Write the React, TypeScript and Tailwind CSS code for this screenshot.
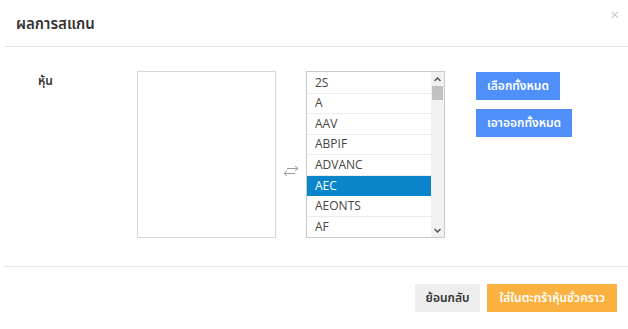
import React from "react";

const items = ["2S", "A", "AAV", "ABPIF", "ADVANC", "AEC", "AEONTS", "AF"];

export default function App() {
  return (
    <div
      className="w-[628px] h-[329px] bg-white overflow-hidden relative"
      style={{ fontFamily: '"Open Sans", "Noto Sans", "Noto Sans Thai", "Noto Sans CJK SC", sans-serif' }}
    >
      {/* header */}
      <div className="ml-[4px] h-[47px] border-b border-[#e5e5e5] flex items-center pl-[12px] relative">
        <span className="text-[15px] font-semibold text-[#333] leading-none">ผลการสแกน</span>
        <span className="absolute right-[9px] top-[7px] text-[#c8c8c8] text-[15px] leading-none">×</span>
      </div>

      {/* body */}
      <div className="ml-[4px] h-[220px] border-b border-[#e5e5e5] flex pt-[24px]">
        <div className="w-[133px] pl-[34px] pt-[1px] text-[12px] font-semibold text-[#333]">หุ้น</div>
        <div className="w-[139px] h-[167px] border border-[#d6d6d6]" />
        <div className="w-[30px] flex items-center justify-center pt-[4px]">
          <svg width="18" height="14" viewBox="0 0 18 14" fill="none" stroke="#9a9a9a" strokeWidth="1">
            <path d="M5 4.5 H16 M13 2 L16 4.5 L13 7" />
            <path d="M13 9.5 H2 M5 7 L2 9.5 L5 12" />
          </svg>
        </div>
        <div className="w-[139px] h-[167px] border border-[#c9c9c9] flex">
          <div className="flex-1 flex flex-col pt-[1px]">
            {items.map((it, i) => (
              <div
                key={it}
                className={
                  "h-[20.6px] flex items-center pl-[8px] text-[12px] " +
                  (it === "AEC"
                    ? "bg-[#0a85c9] text-white"
                    : "text-[#444] " + (i < items.length - 1 ? "border-b border-[#ececec]" : ""))
                }
              >
                {it}
              </div>
            ))}
          </div>
          <div className="w-[13px] bg-[#f1f1f1] flex flex-col items-center">
            <div className="h-[14px] flex items-center justify-center">
              <svg width="7" height="5" viewBox="0 0 7 5"><path d="M0.5 4 L3.5 1 L6.5 4" stroke="#555" strokeWidth="1.5" fill="none" /></svg>
            </div>
            <div className="w-[11px] h-[14px] bg-[#c1c1c1]" />
            <div className="flex-1" />
            <div className="h-[14px] flex items-center justify-center">
              <svg width="7" height="5" viewBox="0 0 7 5"><path d="M0.5 1 L3.5 4 L6.5 1" stroke="#555" strokeWidth="1.5" fill="none" /></svg>
            </div>
          </div>
        </div>
        <div className="ml-[31px] flex flex-col items-start gap-[9px] pt-[1px]">
          <button className="h-[28px] px-[11px] bg-[#4f8ffa] text-white text-[12px] font-semibold">เลือกทั้งหมด</button>
          <button className="h-[28px] px-[11px] bg-[#4f8ffa] text-white text-[12px] font-semibold">เอาออกทั้งหมด</button>
        </div>
      </div>

      {/* footer */}
      <div className="flex justify-end gap-[7px] pr-[11px] pt-[17px]">
        <button className="h-[28px] px-[11px] bg-[#eeeeee] text-[#333] text-[12px] font-semibold">ย้อนกลับ</button>
        <button className="h-[28px] px-[12px] bg-[#fbb13f] text-white text-[12px] font-semibold">ใส่ในตะกร้าหุ้นชั่วคราว</button>
      </div>
    </div>
  );
}
